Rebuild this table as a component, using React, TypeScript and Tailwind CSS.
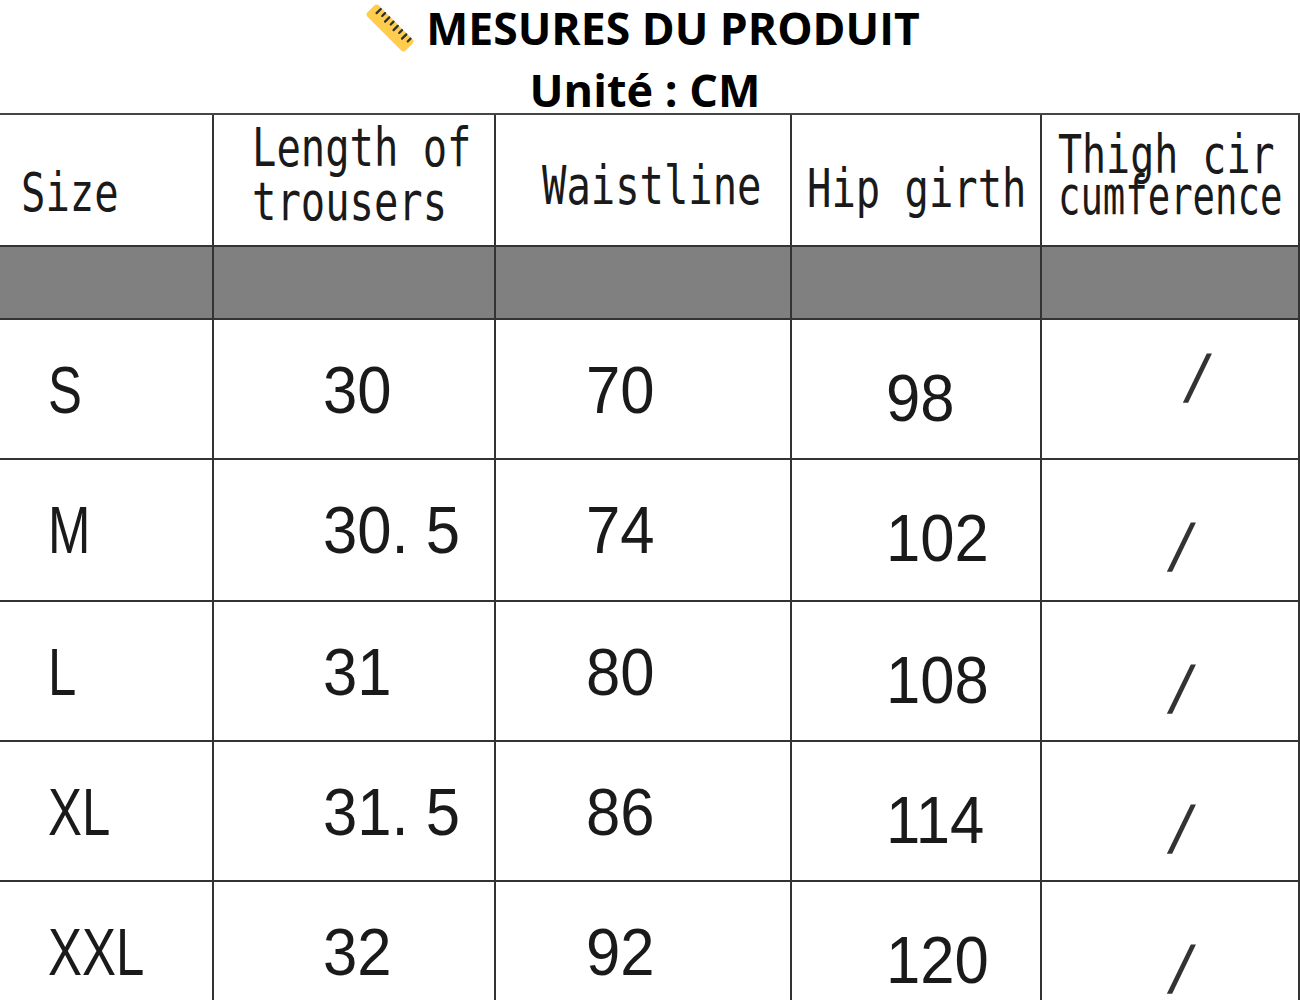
import React from "react";

const rows = [
  { size: "S", length: "30", waist: "70", hip: "98", slashTop: "pt-[25px]", slashLeft: "pl-[146px]", h: "h-[140px]" },
  { size: "M", length: "30. 5", waist: "74", hip: "102", slashTop: "pt-[54px]", slashLeft: "pl-[130px]", h: "h-[142px]" },
  { size: "L", length: "31", waist: "80", hip: "108", slashTop: "pt-[54px]", slashLeft: "pl-[130px]", h: "h-[140px]" },
  { size: "XL", length: "31. 5", waist: "86", hip: "114", slashTop: "pt-[54px]", slashLeft: "pl-[130px]", h: "h-[140px]" },
  { size: "XXL", length: "32", waist: "92", hip: "120", slashTop: "pt-[54px]", slashLeft: "pl-[130px]", h: "h-[140px]" },
];

function Ruler() {
  return (
    <svg width="48" height="48" viewBox="0 0 48 48">
      <g transform="rotate(45 24 24)">
        <rect x="-3" y="16" width="54" height="16" rx="3.5" fill="#FFCC4D" />
        {[4, 10, 16, 22, 28, 34, 40, 46].map((x, i) => (
          <line
            key={x}
            x1={x}
            y1="17"
            x2={x}
            y2={i % 2 === 0 ? 23 : 21}
            stroke="#292F33"
            strokeWidth="2.2"
            strokeLinecap="round"
          />
        ))}
      </g>
    </svg>
  );
}

const mono = "inline-block origin-left whitespace-nowrap font-['DejaVu_Sans_Mono',monospace] text-[54px] text-[#1a1a1a]";
const arial = "inline-block origin-left whitespace-nowrap font-['Liberation_Sans',Arial,sans-serif] text-[67px] leading-[67px] text-[#1a1a1a]";
const line = "border-r-2 border-b-2 border-[#333]";

export default function App() {
  return (
    <div className="w-[1300px] h-[1000px] overflow-hidden bg-white">
      <div className="h-[113px] flex flex-col items-center pt-[4px] font-['Open_Sans',sans-serif] font-bold text-black">
        <div className="flex items-center gap-[12px] -ml-[14px] text-[44.5px] leading-[48px]">
          <Ruler />
          <span>MESURES DU PRODUIT</span>
        </div>
        <div className="mt-[14px] -ml-[10px] text-[45px] leading-[48px]">Unité : CM</div>
      </div>

      <div className="grid grid-cols-[214px_282px_296px_250px_258px] border-t-2 border-[#444]">
        {/* header */}
        <div className={`h-[132px] ${line} pt-[51px] pl-[21px]`}>
          <span className={`${mono} leading-[54px] scale-x-[0.75]`}>Size</span>
        </div>
        <div className={`h-[132px] ${line} pt-[6px] pl-[38px] flex flex-col`}>
          <span className={`${mono} leading-[54px] scale-x-[0.75]`}>Length of</span>
          <span className={`${mono} leading-[54px] scale-x-[0.75]`}>trousers</span>
        </div>
        <div className={`h-[132px] ${line} pt-[44px] pl-[46px]`}>
          <span className={`${mono} leading-[54px] scale-x-[0.75]`}>Waistline</span>
        </div>
        <div className={`h-[132px] ${line} pt-[47px] pl-[15px]`}>
          <span className={`${mono} leading-[54px] scale-x-[0.75]`}>Hip girth</span>
        </div>
        <div className={`h-[132px] ${line} pt-[19px] pl-[16px] flex flex-col overflow-hidden`}>
          <span className={`${mono} leading-[41px] scale-x-[0.74]`}>Thigh cir</span>
          <span className={`${mono} leading-[41px] scale-x-[0.69]`}>cumference</span>
        </div>

        {/* grey band */}
        {[0, 1, 2, 3, 4].map((i) => (
          <div key={i} className={`h-[73px] bg-[#808080] ${line}`} />
        ))}

        {rows.map((r) => (
          <React.Fragment key={r.size}>
            <div className={`${r.h} ${line} pt-[36px] pl-[48px]`}>
              <span className={`${arial} scale-x-[0.76]`}>{r.size}</span>
            </div>
            <div className={`${r.h} ${line} pt-[36px] pl-[109px]`}>
              <span className={`${arial} scale-x-[0.92]`}>{r.length}</span>
            </div>
            <div className={`${r.h} ${line} pt-[36px] pl-[90px]`}>
              <span className={`${arial} scale-x-[0.92]`}>{r.waist}</span>
            </div>
            <div className={`${r.h} ${line} pt-[44px] pl-[94px]`}>
              <span className={`${arial} scale-x-[0.92]`}>{r.hip}</span>
            </div>
            <div className={`${r.h} ${line} ${r.slashTop} ${r.slashLeft}`}>
              <span className="inline-block skew-x-[-12deg] font-['Liberation_Sans',Arial,sans-serif] text-[67px] leading-[67px] text-[#333]">/</span>
            </div>
          </React.Fragment>
        ))}
      </div>
    </div>
  );
}
